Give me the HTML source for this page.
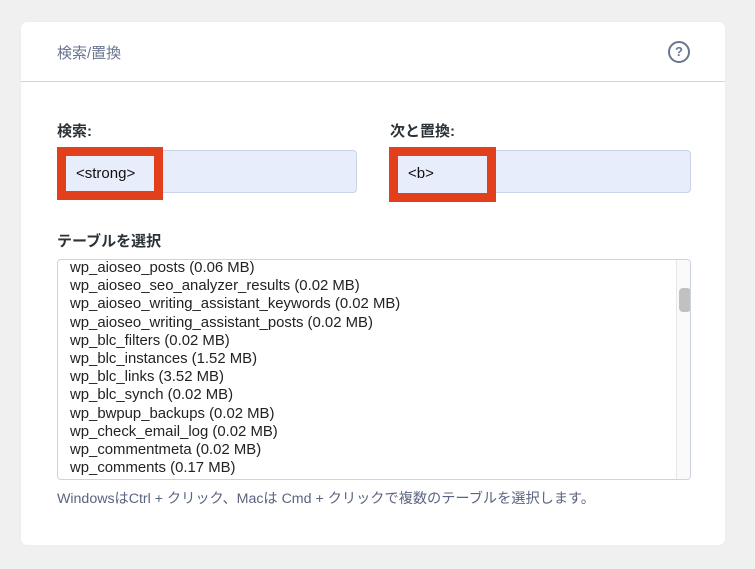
<!DOCTYPE html>
<html><head><meta charset="utf-8"><style>
*{box-sizing:border-box;margin:0;padding:0}
body{width:755px;height:569px;background:#f0f0f1;font-family:"Liberation Sans","Noto Sans CJK JP",sans-serif;position:relative;overflow:hidden}
.card{position:absolute;left:21px;top:22px;width:704px;height:523px;background:#fff;border-radius:6px;box-shadow:0 0 1px rgba(0,0,0,.08)}
.hdr{position:absolute;left:0;top:0;width:100%;height:60px;border-bottom:1px solid #d0d3de}
.title{position:absolute;left:36px;top:20px;font-size:15px;color:#6a7590}
.help{position:absolute;left:647px;top:19px;width:22px;height:22px;border:2px solid #6a7590;border-radius:50%;color:#6a7590;font-size:13px;font-weight:bold;text-align:center;line-height:18px}
.lbl{position:absolute;font-size:15px;font-weight:bold;color:#2c3338}
.inp{position:absolute;height:43px;background:#e8edfb;border:1px solid #cdd3e6;border-radius:4px}
.red{position:absolute;border:9px solid #e2401c;background:#e8edfb;font-size:15px;color:#111;padding-left:10px;line-height:35px}
.list{position:absolute;left:36px;top:237px;width:634px;height:221px;border:1px solid #cdd3e0;border-radius:4px;overflow:hidden}
.list div{font-size:14.9px;color:#222;line-height:18.2px;padding-left:12px}
.list .sb{position:absolute;right:0;top:0;width:14px;height:100%;border-left:1px solid #e6e6e6;background:#fafafa;padding:0}
.th{position:absolute;left:2px;top:28px;width:8px;height:24px;background:#c1c1c1;border-radius:4px}
.note{position:absolute;left:36px;top:466px;font-size:14.2px;color:#5b6480}
</style></head><body>
<div class="card">
<div class="hdr"><div class="title">検索/置換</div><div class="help">?</div></div>
<div class="lbl" style="left:36px;top:98px">検索:</div>
<div class="inp" style="left:36px;top:128px;width:300px"></div>
<div class="red" style="left:36px;top:125px;width:106px;height:53px">&lt;strong&gt;</div>
<div class="lbl" style="left:369px;top:98px">次と置換:</div>
<div class="inp" style="left:369px;top:128px;width:301px"></div>
<div class="red" style="left:368px;top:125px;width:107px;height:55px">&lt;b&gt;</div>
<div class="lbl" style="left:36px;top:208px">テーブルを選択</div>
<div class="list">
<div style="margin-top:-1px">wp_aioseo_posts (0.06 MB)</div>
<div>wp_aioseo_seo_analyzer_results (0.02 MB)</div>
<div>wp_aioseo_writing_assistant_keywords (0.02 MB)</div>
<div>wp_aioseo_writing_assistant_posts (0.02 MB)</div>
<div>wp_blc_filters (0.02 MB)</div>
<div>wp_blc_instances (1.52 MB)</div>
<div>wp_blc_links (3.52 MB)</div>
<div>wp_blc_synch (0.02 MB)</div>
<div>wp_bwpup_backups (0.02 MB)</div>
<div>wp_check_email_log (0.02 MB)</div>
<div>wp_commentmeta (0.02 MB)</div>
<div>wp_comments (0.17 MB)</div>
<div class="sb"><div class="th"></div></div>
</div>
<div class="note">WindowsはCtrl + クリック、Macは Cmd + クリックで複数のテーブルを選択します。</div>
</div>
</body></html>
